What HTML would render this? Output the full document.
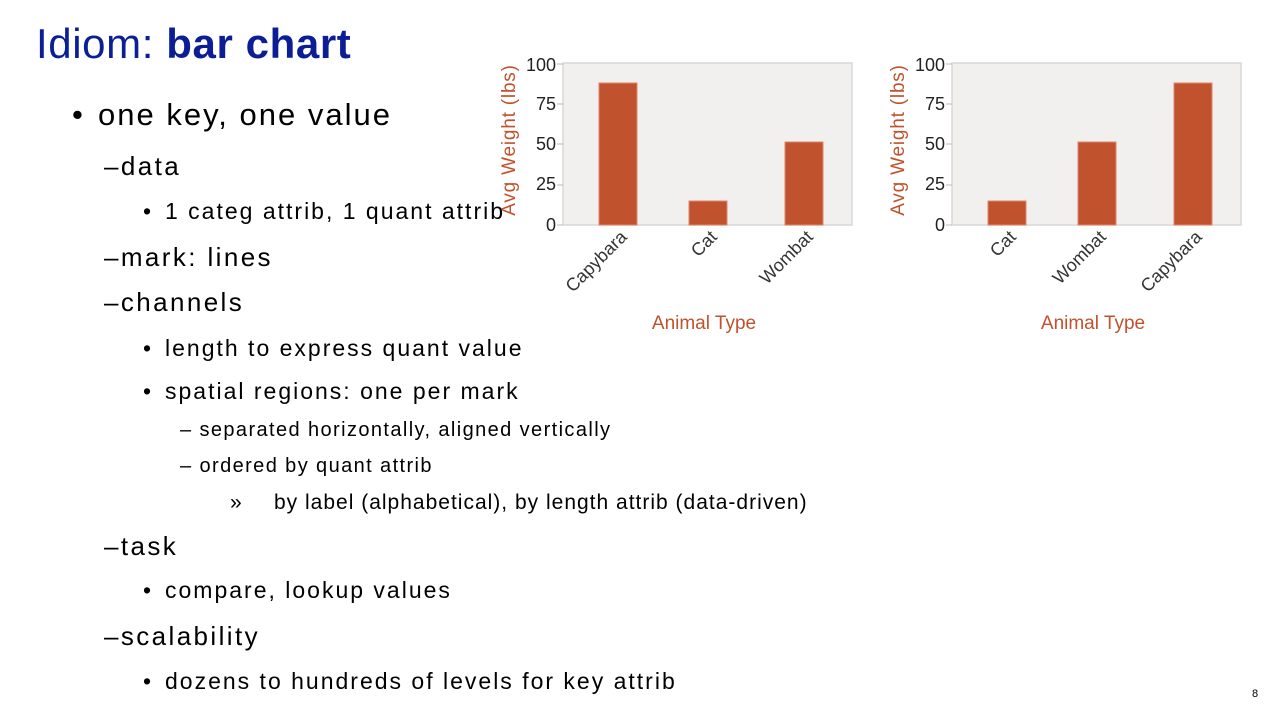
<!DOCTYPE html>
<html><head><meta charset="utf-8"><style>
body{margin:0;width:1280px;height:720px;background:#fff;position:relative;overflow:hidden;font-family:"Liberation Sans",sans-serif;color:#000}
.t{position:absolute;white-space:nowrap;line-height:1}
.a{letter-spacing:2px}.b{letter-spacing:2.4px}.c{letter-spacing:1.4px}.d{letter-spacing:1px}
</style></head><body>
<div class="t" style="left:36px;top:23px;font-size:42px;color:#0b1e96;letter-spacing:0.6px">Idiom: <b>bar chart</b></div>

<div class="t" style="left:72px;top:99px;font-size:31px">•</div>
<div class="t a" style="left:98px;top:99px;font-size:31px">one key, one value</div>
<div class="t b" style="left:104px;top:153px;font-size:26px">–data</div>
<div class="t" style="left:143px;top:200px;font-size:23px">•</div>
<div class="t a" style="left:165px;top:200px;font-size:23px">1 categ attrib, 1 quant attrib</div>
<div class="t b" style="left:104px;top:244px;font-size:26px">–mark: lines</div>
<div class="t b" style="left:104px;top:289px;font-size:26px">–channels</div>
<div class="t" style="left:143px;top:337px;font-size:23px">•</div>
<div class="t a" style="left:165px;top:337px;font-size:23px">length to express quant value</div>
<div class="t" style="left:143px;top:380px;font-size:23px">•</div>
<div class="t a" style="left:165px;top:380px;font-size:23px">spatial regions: one per mark</div>
<div class="t c" style="left:180px;top:420px;font-size:20px">– separated horizontally, aligned vertically</div>
<div class="t c" style="left:180px;top:456px;font-size:20px">– ordered by quant attrib</div>
<div class="t" style="left:230px;top:492px;font-size:21px">»</div>
<div class="t d" style="left:274px;top:492px;font-size:21px">by label (alphabetical), by length attrib (data-driven)</div>
<div class="t b" style="left:104px;top:533px;font-size:26px">–task</div>
<div class="t" style="left:143px;top:579px;font-size:23px">•</div>
<div class="t a" style="left:165px;top:579px;font-size:23px">compare, lookup values</div>
<div class="t b" style="left:104px;top:623px;font-size:26px">–scalability</div>
<div class="t" style="left:143px;top:670px;font-size:23px">•</div>
<div class="t a" style="left:165px;top:670px;font-size:23px">dozens to hundreds of levels for key attrib</div>
<div class="t" style="left:1252px;top:689px;font-size:11px">8</div>

<svg width="1280" height="720" style="position:absolute;left:0;top:0" font-family="Liberation Sans, sans-serif">
<g>
<rect x="563" y="63" width="289" height="162" fill="#f1f0ef" stroke="#d8d8d8" stroke-width="1.5"/>
<g fill="#c0522d" stroke="#e0866a" stroke-width="1">
<rect x="599" y="83" width="38" height="142"/><rect x="689" y="201" width="38" height="24"/><rect x="785" y="142" width="38" height="83"/>
</g>
<g font-size="18" fill="#222" text-anchor="end">
<text x="556" y="71">100</text><text x="556" y="110">75</text><text x="556" y="150">50</text><text x="556" y="190">25</text><text x="556" y="231">0</text>
</g>
<g stroke="#bbb"><line x1="557" y1="64" x2="563" y2="64"/><line x1="557" y1="104" x2="563" y2="104"/><line x1="557" y1="144" x2="563" y2="144"/><line x1="557" y1="185" x2="563" y2="185"/><line x1="557" y1="225" x2="563" y2="225"/></g>
<text transform="translate(515,140) rotate(-90)" text-anchor="middle" font-size="19" letter-spacing="0.8" fill="#c0522d">Avg Weight (lbs)</text>
<g font-size="18" fill="#333" text-anchor="end">
<text transform="translate(628,238) rotate(-45)">Capybara</text>
<text transform="translate(718,238) rotate(-45)">Cat</text>
<text transform="translate(814,238) rotate(-45)">Wombat</text>
</g>
<text x="704" y="329" text-anchor="middle" font-size="19" fill="#c0522d">Animal Type</text>
</g>
<g>
<rect x="952" y="63" width="289" height="162" fill="#f1f0ef" stroke="#d8d8d8" stroke-width="1.5"/>
<g fill="#c0522d" stroke="#e0866a" stroke-width="1">
<rect x="988" y="201" width="38" height="24"/><rect x="1078" y="142" width="38" height="83"/><rect x="1174" y="83" width="38" height="142"/>
</g>
<g font-size="18" fill="#222" text-anchor="end">
<text x="945" y="71">100</text><text x="945" y="110">75</text><text x="945" y="150">50</text><text x="945" y="190">25</text><text x="945" y="231">0</text>
</g>
<g stroke="#bbb"><line x1="946" y1="64" x2="952" y2="64"/><line x1="946" y1="104" x2="952" y2="104"/><line x1="946" y1="144" x2="952" y2="144"/><line x1="946" y1="185" x2="952" y2="185"/><line x1="946" y1="225" x2="952" y2="225"/></g>
<text transform="translate(904,140) rotate(-90)" text-anchor="middle" font-size="19" letter-spacing="0.8" fill="#c0522d">Avg Weight (lbs)</text>
<g font-size="18" fill="#333" text-anchor="end">
<text transform="translate(1017,238) rotate(-45)">Cat</text>
<text transform="translate(1107,238) rotate(-45)">Wombat</text>
<text transform="translate(1203,238) rotate(-45)">Capybara</text>
</g>
<text x="1093" y="329" text-anchor="middle" font-size="19" fill="#c0522d">Animal Type</text>
</g>
</svg>
</body></html>
